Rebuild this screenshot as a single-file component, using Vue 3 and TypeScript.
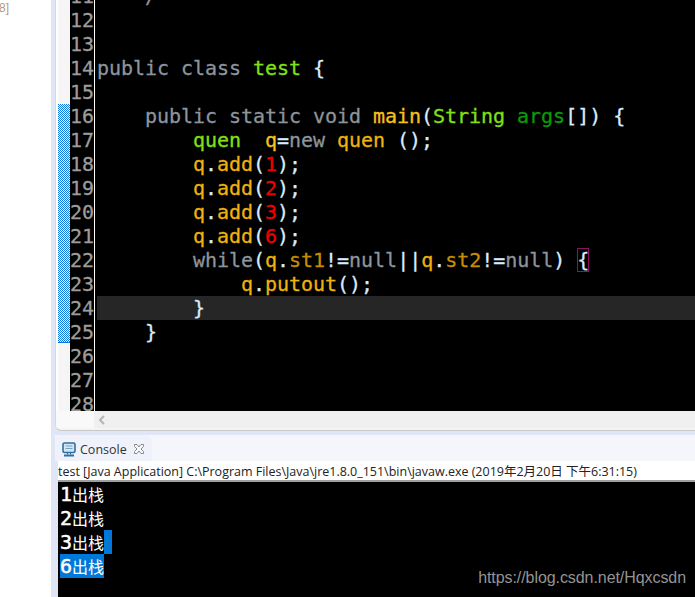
<script setup lang="ts">
type Tok = [string, string];
const lines: { n: number; toks: Tok[]; cur?: boolean }[] = [
  { n: 11, toks: [["    /", "cm"]] },
  { n: 12, toks: [] },
  { n: 13, toks: [] },
  { n: 14, toks: [["public class ", "kw"], ["test", "ty"], [" {", "pn"]] },
  { n: 15, toks: [] },
  { n: 16, toks: [["    ", "pn"], ["public static void ", "kw"], ["main", "fn"], ["(", "pn"], ["String", "ty"], [" ", "pn"], ["args", "ar"], ["[]) {", "pn"]] },
  { n: 17, toks: [["        ", "pn"], ["quen", "ty"], ["  ", "pn"], ["q", "fn"], ["=", "pn"], ["new ", "kw"], ["quen", "va"], [" ();", "pn"]] },
  { n: 18, toks: [["        ", "pn"], ["q", "va"], [".", "pn"], ["add", "va"], ["(", "pn"], ["1", "nm"], [");", "pn"]] },
  { n: 19, toks: [["        ", "pn"], ["q", "va"], [".", "pn"], ["add", "va"], ["(", "pn"], ["2", "nm"], [");", "pn"]] },
  { n: 20, toks: [["        ", "pn"], ["q", "va"], [".", "pn"], ["add", "va"], ["(", "pn"], ["3", "nm"], [");", "pn"]] },
  { n: 21, toks: [["        ", "pn"], ["q", "va"], [".", "pn"], ["add", "va"], ["(", "pn"], ["6", "nm"], [");", "pn"]] },
  { n: 22, toks: [["        ", "pn"], ["while", "kw"], ["(", "pn"], ["q", "va"], [".", "pn"], ["st1", "fd"], ["!=", "pn"], ["null", "kw"], ["||", "pn"], ["q", "va"], [".", "pn"], ["st2", "fd"], ["!=", "pn"], ["null", "kw"], [") ", "pn"], ["{", "br"]] },
  { n: 23, toks: [["            ", "pn"], ["q", "va"], [".", "pn"], ["putout", "va"], ["();", "pn"]] },
  { n: 24, toks: [["        }", "pn"]], cur: true },
  { n: 25, toks: [["    }", "pn"]] },
  { n: 26, toks: [] },
  { n: 27, toks: [] },
  { n: 28, toks: [] },
];
const output = [
  { d: "1", sel: false, tail: false },
  { d: "2", sel: false, tail: false },
  { d: "3", sel: false, tail: true },
  { d: "6", sel: true, tail: false },
];
</script>

<template>
  <div class="page">
    <aside class="side"><span class="crumb">8]</span></aside>
    <main class="work">
      <section class="editor">
        <div class="code-area">
          <div class="ruler">
            <svg class="ruler-mark" width="12" height="239">
              <defs>
                <pattern id="chk" width="2" height="2" patternUnits="userSpaceOnUse">
                  <rect width="2" height="2" fill="#fff" />
                  <rect width="1" height="1" fill="#0a78dc" />
                  <rect x="1" y="1" width="1" height="1" fill="#0a78dc" />
                </pattern>
              </defs>
              <rect width="12" height="239" fill="url(#chk)" shape-rendering="crispEdges" />
              <rect y="238" width="12" height="1" fill="#0a78dc" shape-rendering="crispEdges" />
            </svg>
          </div>
          <div class="code">
            <div v-for="l in lines" :key="l.n" class="line">
              <span class="num">{{ l.n }}</span>
              <span class="sep"></span>
              <span class="src" :class="{ cur: l.cur }"><span v-for="(t, i) in l.toks" :key="i" :class="t[1]">{{ t[0] }}</span></span>
            </div>
          </div>
        </div>
        <div class="hscroll">
          <div class="hscroll-pad"></div>
          <div class="hscroll-track">
            <svg width="8" height="10" viewBox="0 0 8 10"><path d="M6 1 2 5l4 4" fill="none" stroke="#b4b4b4" stroke-width="2" /></svg>
          </div>
        </div>
      </section>
      <section class="console">
        <div class="tabs">
          <div class="tab">
            <svg class="mon" width="14" height="15" viewBox="0 0 14 15">
              <rect x="1" y="1" width="12" height="9.500" rx="1.500" fill="#d5e5f3" stroke="#2f6f9f" stroke-width="1.600" />
              <path d="M3.500 4h7M3.500 6.500h7" stroke="#6fa3c8" stroke-width="1" />
              <path d="M5.500 11v1.500M8.500 11v1.500" stroke="#2f6f9f" stroke-width="1" />
              <path d="M2 13.500h10" stroke="#2f6f9f" stroke-width="2" />
            </svg>
            <span class="tab-label">Console</span>
            <svg class="close" width="10" height="10" viewBox="0 0 10 10">
              <path d="M.5.500h2.500L5 3l2-2.500h2.500v2L7 5l2.500 2.500v2H7L5 7 3 9.500H.5v-2L3 5 .5 2.500z" fill="#f6f7fb" stroke="#8a8a8a" stroke-width="1" />
            </svg>
          </div>
        </div>
        <div class="status">test [Java Application] C:\Program Files\Java\jre1.8.0_151\bin\javaw.exe (2019年2月20日 下午6:31:15)</div>
        <div class="out">
          <div v-for="o in output" :key="o.d" class="out-line">
            <span class="out-text" :class="{ sel: o.sel }"><span class="dig">{{ o.d }}</span><span class="cjk">出栈</span></span><span v-if="o.tail" class="tail"></span>
          </div>
          <span class="mark">https://blog.csdn.net/Hqxcsdn</span>
        </div>
      </section>
    </main>
  </div>
</template>

<style>
html, body { margin: 0; background: #fff; overflow: hidden; }
</style>

<style scoped>
.page { display: flex; width: 695px; height: 597px; overflow: hidden; background: #fff; }
.side { width: 51px; flex: none; background: #fff; }
.crumb { display: block; margin-left: -1px; font: 12px/17px "Liberation Sans", sans-serif; color: #b39a78; }
.work { width: 644px; flex: none; display: flex; flex-direction: column; background: #e1e6f6; padding-left: 4px; box-sizing: border-box; }
.editor { height: 431px; flex: none; display: flex; flex-direction: column; background: #f4f4f4; border-bottom: 1px solid #c8c8c8; border-left: 1px solid #d8d8d8; border-bottom-left-radius: 6px; box-sizing: border-box; overflow: hidden; }
.code-area { height: 411px; flex: none; display: flex; background: #fff; overflow: hidden; }
.ruler { width: 12px; margin-left: 2px; flex: none; background: #f5f5f5; padding-top: 104px; box-sizing: border-box; }
.ruler-mark { display: block; }
.code { flex: 1; margin-top: -16px; font: 20px/24px "DejaVu Sans Mono", monospace; letter-spacing: -0.04px; white-space: pre; background: #000; min-width: 0; -webkit-text-stroke: 0.3px; }
.line { display: flex; height: 24px; }
.num { width: 24px; flex: none; text-align: right; color: #9c9c9c; background: #000; }
.sep { width: 1px; flex: none; background: #fff; }
.src { flex: 1; margin-left: 2px; color: #d8ecff; }
.src.cur { background: #262626; }
.kw { color: #8d959c; }
.cm { color: #8d959c; }
.ty { color: #80e016; }
.fn { color: #f8c11c; }
.va { color: #f0b010; }
.fd { color: #c98c00; }
.nm { color: #f00000; }
.ar { color: #0a9a0a; }
.pn { color: #d8ecff; }
.br { color: #d8ecff; outline: 1px solid #8a1463; outline-offset: -1px; }
.hscroll { height: 17px; flex: none; display: flex; }
.hscroll-pad { width: 38px; flex: none; background: #f9f9f9; }
.hscroll-track { flex: 1; display: flex; align-items: center; padding-left: 4px; background: #f0f0f0; }
.console { flex: 1; display: flex; flex-direction: column; min-height: 0; }
.tabs { margin-top: 4px; height: 26px; flex: none; background: #f5f6fc; }
.tab { width: 97px; height: 26px; display: flex; align-items: center; background: #eff2fb; border-top-right-radius: 8px; border-top-left-radius: 6px; box-sizing: border-box; padding: 2px 0 0 7px; }
.mon { flex: none; }
.tab-label { margin: 2px 0 0 4px; font: 12.5px/16px "Open Sans", sans-serif; color: #333; }
.close { margin-left: 7px; flex: none; }
.status { height: 19px; flex: none; margin-left: 3px; background: #fff; border-bottom: 2px solid #9e9e9e; font: 12.5px/21px "Open Sans", "Noto Sans CJK SC", sans-serif; letter-spacing: -0.01px; color: #222; white-space: nowrap; overflow: hidden; }
.out { flex: 1; position: relative; margin-left: 3px; background: #000; padding-left: 2px; overflow: hidden; }
.out-line { display: flex; height: 24px; color: #fff; }
.out-text { display: flex; align-items: center; }
.out-text.sel { background: #0078d7; }
.dig { width: 12px; font: 20px/24px "DejaVu Sans Mono", monospace; -webkit-text-stroke: 0.5px; }
.cjk { font: 16px/24px "Noto Sans CJK SC", sans-serif; }
.tail { width: 8px; background: #0078d7; }
.mark { position: absolute; right: 9px; bottom: 9px; font: 16px/20px "Liberation Sans", sans-serif; letter-spacing: -0.07px; color: #949494; white-space: nowrap; }
</style>
